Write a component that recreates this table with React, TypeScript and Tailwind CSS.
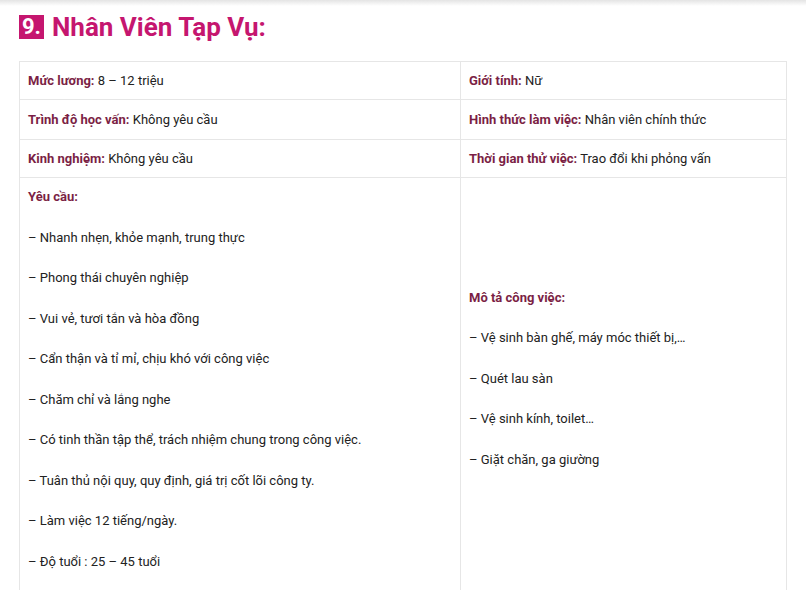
import React from 'react';

const label = 'font-bold text-[#7b1f45]';

const infoRows = [
  [
    { k: 'Mức lương:', v: '8 – 12 triệu' },
    { k: 'Giới tính:', v: 'Nữ' },
  ],
  [
    { k: 'Trình độ học vấn:', v: 'Không yêu cầu' },
    { k: 'Hình thức làm việc:', v: 'Nhân viên chính thức' },
  ],
  [
    { k: 'Kinh nghiệm:', v: 'Không yêu cầu' },
    { k: 'Thời gian thử việc:', v: 'Trao đổi khi phỏng vấn' },
  ],
];

const requirements = [
  'Nhanh nhẹn, khỏe mạnh, trung thực',
  'Phong thái chuyên nghiệp',
  'Vui vẻ, tươi tắn và hòa đồng',
  'Cẩn thận và tỉ mỉ, chịu khó với công việc',
  'Chăm chỉ và lắng nghe',
  'Có tinh thần tập thể, trách nhiệm chung trong công việc.',
  'Tuân thủ nội quy, quy định, giá trị cốt lõi công ty.',
  'Làm việc 12 tiếng/ngày.',
  'Độ tuổi : 25 – 45 tuổi',
];

const duties = ['Vệ sinh bàn ghế, máy móc thiết bị,…', 'Quét lau sàn', 'Vệ sinh kính, toilet…', 'Giặt chăn, ga giường'];

export default function App() {
  return (
    <div className="bg-white min-h-[590px] font-['Roboto',sans-serif] text-[13px] text-[#222]">
      <div className="h-[6px] bg-gradient-to-b from-[#e4e4e4] to-white" />

      <h2 className="flex items-center gap-2 px-[19px] pt-[6px] text-[26px] font-bold leading-[30px] text-[#c5166f]">
        <span className="bg-[#c5166f] px-[3px] text-white text-[22px] leading-[24px]">9.</span>
        Nhân Viên Tạp Vụ:
      </h2>

      <table className="ml-[19px] mt-[19px] w-[768px] border-collapse">
        <tbody>
          {infoRows.map((row, i) => (
            <tr key={i}>
              {row.map((c, j) => (
                <td
                  key={j}
                  className={`border border-[#e6e6e6] px-[8px] ${i === 1 ? 'h-[40px]' : 'h-[38px]'} ${j === 0 ? 'w-[441px]' : ''}`}
                >
                  <span className={label}>{c.k}</span> {c.v}
                </td>
              ))}
            </tr>
          ))}
          <tr>
            <td className="border border-[#e6e6e6] px-[8px] pt-[9px] pb-[8px] align-top">
              <p className={`${label} mb-[20px] leading-[20.5px]`}>Yêu cầu:</p>
              {requirements.map((r) => (
                <p key={r} className="mb-[20px] leading-[20.5px]">– {r}</p>
              ))}
            </td>
            <td className="border border-[#e6e6e6] px-[8px] align-middle">
              <p className={`${label} mb-[20px] leading-[20.5px]`}>Mô tả công việc:</p>
              {duties.map((d) => (
                <p key={d} className="mb-[20px] leading-[20.5px]">– {d}</p>
              ))}
            </td>
          </tr>
        </tbody>
      </table>
    </div>
  );
}
